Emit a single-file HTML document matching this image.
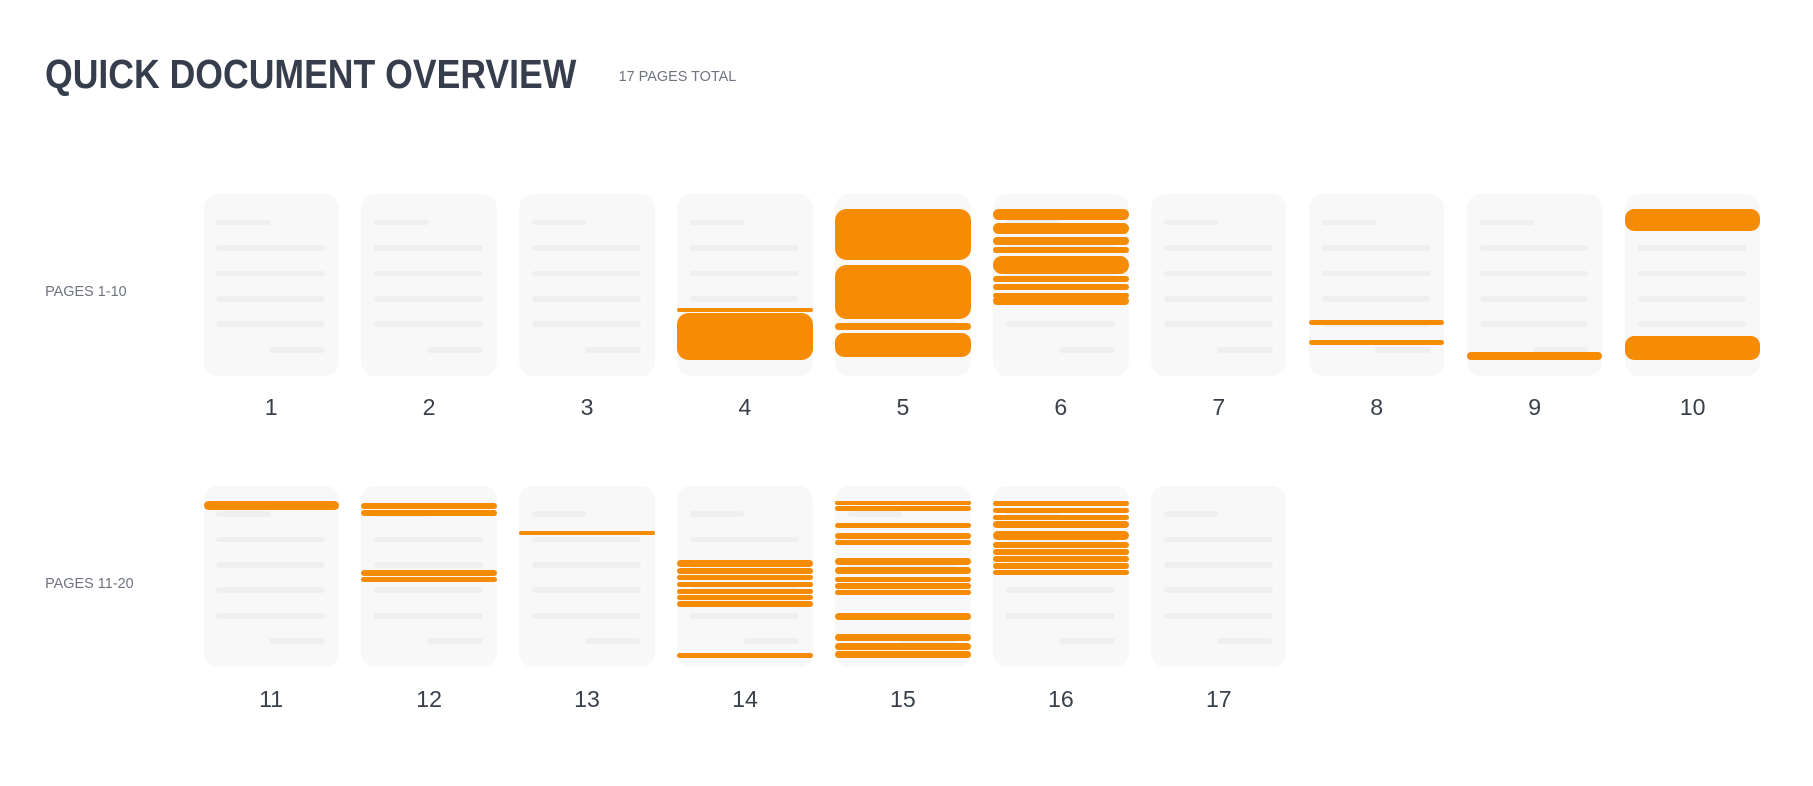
<!DOCTYPE html>
<html><head><meta charset="utf-8"><style>
html,body{margin:0;padding:0;background:#fff;}
body{width:1813px;height:786px;overflow:hidden;}
#w{position:relative;width:1568px;height:680px;zoom:1.15625;font-family:"Liberation Sans",sans-serif;}
h1{position:absolute;left:39px;top:44px;margin:0;font-size:35px;line-height:40px;font-weight:900;color:#363d4c;transform:scaleX(0.88);transform-origin:left;white-space:nowrap;}
.tot{position:absolute;left:535px;top:60px;font-size:12.5px;color:#6f7480;}
.lab{position:absolute;left:39px;font-size:12.5px;color:#6f7480;}
.c{position:absolute;width:117px;height:157px;background:#f8f8f8;border-radius:12px;}
.g{position:absolute;height:5px;background:#efefef;border-radius:3px;}
.o{position:absolute;left:0;width:117px;background:#f68b05;border-radius:6px;}
.n{position:absolute;width:117px;text-align:center;font-size:20px;color:#3a404b;}
</style></head><body><div id="w">
<h1>QUICK DOCUMENT OVERVIEW</h1>
<div class="tot">17 PAGES TOTAL</div>
<div class="lab" style="top:246px">PAGES 1-10</div>
<div class="lab" style="top:498px">PAGES 11-20</div>
<div id="cards"></div>
</div>
<script>
var hl={
4:[[98,102],[103,143,10]],
5:[[13,57,10],[61,108,10],[111,117],[120,141,8]],
6:[[13,22],[25,34],[37,44],[46,51],[53,69,8],[71,76],[78,83],[85,90],[89,96]],
8:[[109,113],[126,130]],
9:[[136,143]],
10:[[13,32,8],[123,143,8]],
11:[[13,21]],
12:[[15,20],[21,26],[73,78],[79,83]],
13:[[39,43]],
14:[[64,70],[71,76],[77,82],[83,88],[89,94],[95,99],[100,105],[145,149]],
15:[[13,17],[18,22],[32,37],[41,46],[47,51],[63,69],[70,76],[79,83],[84,89],[90,95],[110,116],[128,134],[136,142],[143,149]],
16:[[13,18],[19,24],[25,30],[31,37],[39,47],[49,54],[55,60],[61,66],[67,72],[73,77]]
};
var out='';
for(var i=1;i<=17;i++){
 var r=i<=10?0:1, k=r?i-11:i-1;
 var x=176+k*136.6, y=r?420:168;
 out+='<div class="c" style="left:'+x+'px;top:'+y+'px">';
 out+='<div class="g" style="left:11px;top:22px;width:47px"></div>';
 [44,66,88,110].forEach(function(t){out+='<div class="g" style="left:11px;top:'+t+'px;width:94px"></div>';});
 out+='<div class="g" style="left:57px;top:132px;width:48px"></div>';
 (hl[i]||[]).forEach(function(b){out+='<div class="o" style="top:'+b[0]+'px;height:'+(b[1]-b[0])+'px;'+(b[2]?'border-radius:'+b[2]+'px':'')+'"></div>';});
 out+='</div>';
 out+='<div class="n" style="left:'+x+'px;top:'+(y+173)+'px">'+i+'</div>';
}
document.getElementById('cards').innerHTML=out;
</script>
</body></html>
